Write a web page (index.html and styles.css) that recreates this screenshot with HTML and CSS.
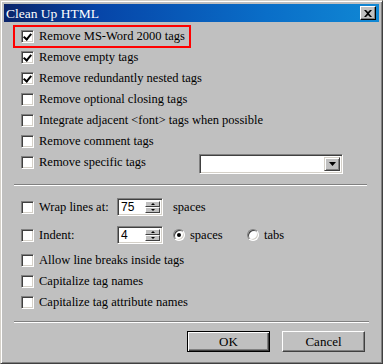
FILE: index.html
```html
<!DOCTYPE html>
<html lang="en">
<head>
    <meta charset="UTF-8">
    <title>Clean Up HTML</title>
    <link rel="stylesheet" href="styles.css">
</head>
<body>

<div class="janela">
    <div class="titulo">
        <span class="titulo-texto">Clean Up HTML</span>
        <span class="fechar">
            <svg width="8" height="7" viewBox="0 0 8 7"><path d="M0 0h2l2 2 2-2h2L5 3.5 8 7H6L4 5 2 7H0l3-3.5z" fill="#000"/></svg>
        </span>
    </div>

    <div class="corpo">
        <div class="grupo">
            <div class="linha destaque">
                <span class="caixa marcada"></span>
                <span>Remove MS-Word 2000 tags</span>
            </div>
            <div class="linha">
                <span class="caixa marcada"></span>
                <span>Remove empty tags</span>
            </div>
            <div class="linha">
                <span class="caixa marcada"></span>
                <span>Remove redundantly nested tags</span>
            </div>
            <div class="linha">
                <span class="caixa"></span>
                <span>Remove optional closing tags</span>
            </div>
            <div class="linha">
                <span class="caixa"></span>
                <span>Integrate adjacent &lt;font&gt; tags when possible</span>
            </div>
            <div class="linha">
                <span class="caixa"></span>
                <span>Remove comment tags</span>
            </div>
            <div class="linha">
                <span class="caixa"></span>
                <span class="rotulo-largo">Remove specific tags</span>
                <span class="combo">
                    <span class="combo-seta"><svg width="7" height="4" viewBox="0 0 7 4"><path d="M0 0h7L3.5 4z" fill="#000"/></svg></span>
                </span>
            </div>
        </div>

        <div class="separador"></div>

        <div class="grupo">
            <div class="linha alta">
                <span class="caixa"></span>
                <span class="rotulo">Wrap lines at:</span>
                <span class="spin"><span class="spin-valor">75</span><span class="spin-botoes"><span class="spin-b"><i class="seta-cima"></i></span><span class="spin-b"><i class="seta-baixo"></i></span></span></span>
                <span class="depois">spaces</span>
            </div>
            <div class="linha alta">
                <span class="caixa"></span>
                <span class="rotulo">Indent:</span>
                <span class="spin"><span class="spin-valor">4</span><span class="spin-botoes"><span class="spin-b"><i class="seta-cima"></i></span><span class="spin-b"><i class="seta-baixo"></i></span></span></span>
                <span class="radio marcado"></span>
                <span class="radio-texto">spaces</span>
                <span class="radio"></span>
                <span class="radio-texto">tabs</span>
            </div>
            <div class="linha">
                <span class="caixa"></span>
                <span>Allow line breaks inside tags</span>
            </div>
            <div class="linha">
                <span class="caixa"></span>
                <span>Capitalize tag names</span>
            </div>
            <div class="linha">
                <span class="caixa"></span>
                <span>Capitalize tag attribute names</span>
            </div>
        </div>

        <div class="separador baixo"></div>

        <div class="botoes">
            <button class="botao padrao">OK</button>
            <button class="botao">Cancel</button>
        </div>
    </div>
</div>

</body>
</html>
```

FILE: styles.css
```css
* {
    margin: 0;
    padding: 0;
    box-sizing: border-box;
}

body {
    background: #c0c0c0;
    font-family: 'Liberation Serif', serif;
    font-size: 12.5px;
    color: #000;
}

.janela {
    width: 383px;
    height: 364px;
    background: #c0c0c0;
    border-top: 1px solid #d4d0c8;
    border-left: 1px solid #d4d0c8;
    border-right: 1px solid #404040;
    border-bottom: 1px solid #404040;
    box-shadow: inset 1px 1px #fff, inset -1px -1px #808080;
    padding: 3px;
    display: flex;
    flex-direction: column;
}

.titulo {
    height: 18px;
    background: linear-gradient(to right, #0a246a, #0645a8 25%, #0a6ec8 70%, #1088d4);
    display: flex;
    align-items: center;
    justify-content: space-between;
    padding: 0 3px 0 2px;
    color: #fff;
}

.titulo-texto {
    font-size: 13.5px;
    padding-top: 1px;
}

.fechar {
    width: 16px;
    height: 14px;
    background: #c0c0c0;
    border-top: 1px solid #fff;
    border-left: 1px solid #fff;
    border-right: 1px solid #000;
    border-bottom: 1px solid #000;
    box-shadow: inset -1px -1px #808080;
    display: flex;
    align-items: center;
    justify-content: center;
}

.corpo {
    flex: 1;
    padding: 4px 10px 0 10px;
    display: flex;
    flex-direction: column;
}

.linha {
    height: 21px;
    display: flex;
    align-items: center;
    padding-left: 7px;
    white-space: nowrap;
}

.linha.alta {
    height: 22px;
}

.linha.alta + .linha.alta {
    margin-top: 6px;
    margin-bottom: 4px;
}

.grupo .linha.alta:first-child {
    margin-top: 10px;
}

.destaque {
    outline: 2px solid #ff0000;
    outline-offset: -1px;
    width: 176px;
}

.caixa {
    width: 13px;
    height: 13px;
    background: #fff;
    border-top: 1px solid #808080;
    border-left: 1px solid #808080;
    border-right: 1px solid #fff;
    border-bottom: 1px solid #fff;
    box-shadow: inset 1px 1px #404040, inset -1px -1px #d4d0c8;
    margin-right: 5px;
    flex-shrink: 0;
    position: relative;
}

.caixa.marcada::after {
    content: "";
    position: absolute;
    left: 3px;
    top: 1px;
    width: 3px;
    height: 6px;
    border-right: 2px solid #000;
    border-bottom: 2px solid #000;
    transform: rotate(40deg);
}

.rotulo-largo {
    width: 160px;
}

.combo {
    width: 144px;
    height: 20px;
    background: #fff;
    border-top: 1px solid #808080;
    border-left: 1px solid #808080;
    border-right: 1px solid #fff;
    border-bottom: 1px solid #fff;
    box-shadow: inset 1px 1px #404040, inset -1px -1px #d4d0c8;
    display: flex;
    justify-content: flex-end;
    padding: 2px;
    margin-top: 2px;
}

.combo-seta {
    width: 16px;
    height: 14px;
    background: #c0c0c0;
    border-top: 1px solid #d4d0c8;
    border-left: 1px solid #d4d0c8;
    border-right: 1px solid #404040;
    border-bottom: 1px solid #404040;
    box-shadow: inset 1px 1px #fff, inset -1px -1px #808080;
    display: flex;
    align-items: center;
    justify-content: center;
}

.separador {
    height: 2px;
    border-top: 1px solid #808080;
    border-bottom: 1px solid #fff;
    margin-top: 11px;
    margin-right: 2px;
}

.separador.baixo {
    margin-top: 8px;
    margin-right: 0;
}

.rotulo {
    width: 78px;
}

.spin {
    width: 46px;
    height: 18px;
    background: #fff;
    border-top: 1px solid #808080;
    border-left: 1px solid #808080;
    border-right: 1px solid #fff;
    border-bottom: 1px solid #fff;
    box-shadow: inset 1px 1px #404040, inset -1px -1px #d4d0c8;
    display: flex;
    padding: 2px 2px 2px 3px;
    margin-right: 10px;
}

.spin-valor {
    flex: 1;
    font-family: 'Liberation Sans', sans-serif;
    font-size: 12px;
    line-height: 13px;
}

.spin-botoes {
    width: 15px;
    display: flex;
    flex-direction: column;
}

.spin-b {
    flex: 1;
    background: #c0c0c0;
    border-top: 1px solid #fff;
    border-left: 1px solid #fff;
    border-right: 1px solid #404040;
    border-bottom: 1px solid #404040;
    display: flex;
    align-items: center;
    justify-content: center;
}

.seta-cima {
    border-left: 2px solid transparent;
    border-right: 2px solid transparent;
    border-bottom: 2px solid #000;
}

.seta-baixo {
    border-left: 2px solid transparent;
    border-right: 2px solid transparent;
    border-top: 2px solid #000;
}

.radio {
    width: 12px;
    height: 12px;
    border-radius: 50%;
    background: #fff;
    border-top: 1px solid #808080;
    border-left: 1px solid #808080;
    border-right: 1px solid #fff;
    border-bottom: 1px solid #fff;
    box-shadow: inset 1px 1px #404040, inset -1px -1px #d4d0c8;
    flex-shrink: 0;
    position: relative;
    margin-right: 5px;
}

.radio.marcado::after {
    content: "";
    position: absolute;
    left: 3px;
    top: 3px;
    width: 4px;
    height: 4px;
    border-radius: 50%;
    background: #000;
}

.radio-texto {
    width: 57px;
}

.botoes {
    display: flex;
    justify-content: flex-end;
    gap: 12px;
    margin-top: 8px;
    padding-right: 4px;
}

.botao {
    width: 83px;
    height: 21px;
    background: #c0c0c0;
    font-family: 'Liberation Serif', serif;
    font-size: 13px;
    border-top: 1px solid #fff;
    border-left: 1px solid #fff;
    border-right: 1px solid #404040;
    border-bottom: 1px solid #404040;
    box-shadow: inset -1px -1px #808080;
}

.botao.padrao {
    border: 1px solid #000;
    box-shadow: inset 1px 1px #fff, inset -1px -1px #404040, inset -2px -2px #808080;
}
```
